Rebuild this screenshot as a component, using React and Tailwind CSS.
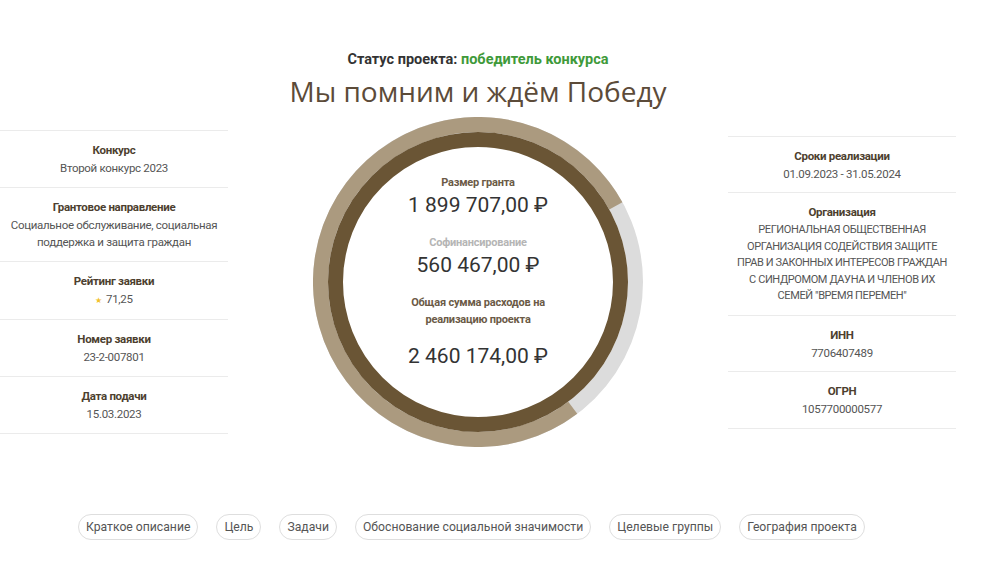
// Карточка проекта: статус, название, суммы и реквизиты
const leftRows = [
  { label: "Конкурс", lines: ["Второй конкурс 2023"] },
  {
    label: "Грантовое направление",
    lines: ["Социальное обслуживание, социальная", "поддержка и защита граждан"],
  },
  { label: "Рейтинг заявки", lines: ["71,25"], star: true },
  { label: "Номер заявки", lines: ["23-2-007801"] },
  { label: "Дата подачи", lines: ["15.03.2023"] },
];

const rightRows = [
  { label: "Сроки реализации", lines: ["01.09.2023 - 31.05.2024"] },
  {
    label: "Организация",
    lines: [
      "РЕГИОНАЛЬНАЯ ОБЩЕСТВЕННАЯ",
      "ОРГАНИЗАЦИЯ СОДЕЙСТВИЯ ЗАЩИТЕ",
      "ПРАВ И ЗАКОННЫХ ИНТЕРЕСОВ ГРАЖДАН",
      "С СИНДРОМОМ ДАУНА И ЧЛЕНОВ ИХ",
      'СЕМЕЙ "ВРЕМЯ ПЕРЕМЕН"',
    ],
    caps: true,
  },
  { label: "ИНН", lines: ["7706407489"] },
  { label: "ОГРН", lines: ["1057700000577"] },
];

const tabs = [
  "Краткое описание",
  "Цель",
  "Задачи",
  "Обоснование социальной значимости",
  "Целевые группы",
  "География проекта",
];

const InfoColumn = ({ rows, tight }) => (
  <div className="w-[228px] border-t border-[#ebebeb]">
    {rows.map((row) => (
      <div
        key={row.label}
        className="border-b border-[#ebebeb] pt-[10px] pb-[10px] text-center"
      >
        <div className="text-[11.5px] leading-[19px] tracking-[-0.3px] font-bold text-[#4d3f2f]">
          {row.label}
        </div>
        {row.lines.map((line) => (
          <div
            key={line}
            className={`whitespace-nowrap text-[#555] ${
              row.caps ? "text-[11px] tracking-[-0.4px]" : "text-[11.5px] tracking-[-0.3px]"
            } ${tight ? "leading-[16.5px]" : "leading-[17px]"}`}
          >
            {row.star && (
              <span className="text-[8px] text-[#f2c12e] mr-1 align-middle">★</span>
            )}
            {line}
          </div>
        ))}
      </div>
    ))}
  </div>
);

// Кольцевая диаграмма: грант / софинансирование
const Ring = () => {
  const r = 157.5;
  const c = 2 * Math.PI * r;
  const share = 1899707 / 2460174;
  return (
    <svg width="330" height="330" viewBox="0 0 330 330" aria-hidden="true">
      <circle cx="165" cy="165" r={r} fill="none" stroke="#dcdcdc" strokeWidth="15" />
      <circle
        cx="165"
        cy="165"
        r={r}
        fill="none"
        stroke="#ab9a7f"
        strokeWidth="15"
        strokeDasharray={`${c * share} ${c}`}
        transform="rotate(53 165 165)"
      />
      <circle cx="165" cy="165" r="142.5" fill="none" stroke="#6a5535" strokeWidth="15" />
    </svg>
  );
};

const Amount = ({ children, className = "" }) => (
  <div className={`text-[21px] leading-[26px] text-[#333] ${className}`}>{children}</div>
);

export default function App() {
  return (
    <div className="min-h-screen bg-white font-['Roboto','Noto_Sans',sans-serif]">
      <div className="w-[956px] pt-[50px]">
        <div className="text-center text-[14.5px] leading-[20px] font-bold text-[#333]">
          Статус проекта: <span className="text-[#3f9a3a]">победитель конкурса</span>
        </div>
        <h1 className="text-center font-['Open_Sans',sans-serif] text-[28px] leading-[36px] text-[#5c4b39] mt-[3px]">
          Мы помним и ждём Победу
        </h1>

        <div className="mt-[8px] flex items-center justify-between">
          <InfoColumn rows={leftRows} />

          <div className="relative w-[330px] h-[330px]">
            <Ring />
            <div className="absolute inset-0 flex flex-col items-center pt-[57px] text-center">
              <div className="text-[11px] leading-[18px] tracking-[-0.2px] font-bold text-[#6b5a46]">
                Размер гранта
              </div>
              <Amount>1 899 707,00 ₽</Amount>
              <div className="mt-[16px] text-[11px] leading-[18px] tracking-[-0.2px] font-bold text-[#b5b5b5]">
                Софинансирование
              </div>
              <Amount>560 467,00 ₽</Amount>
              <div className="mt-[16px] text-[11px] leading-[17px] tracking-[-0.2px] font-bold text-[#6b5a46]">
                Общая сумма расходов на
                <br />
                реализацию проекта
              </div>
              <Amount className="mt-[15px]">2 460 174,00 ₽</Amount>
            </div>
          </div>

          <InfoColumn rows={rightRows} tight />
        </div>

        <div className="mt-[67px] flex gap-[18px] pl-[78px]">
          {tabs.map((t) => (
            <button
              key={t}
              type="button"
              className="h-[26px] rounded-full border border-[#dedede] px-[7px] text-[12.2px] text-[#555] bg-white"
            >
              {t}
            </button>
          ))}
        </div>
      </div>
    </div>
  );
}
